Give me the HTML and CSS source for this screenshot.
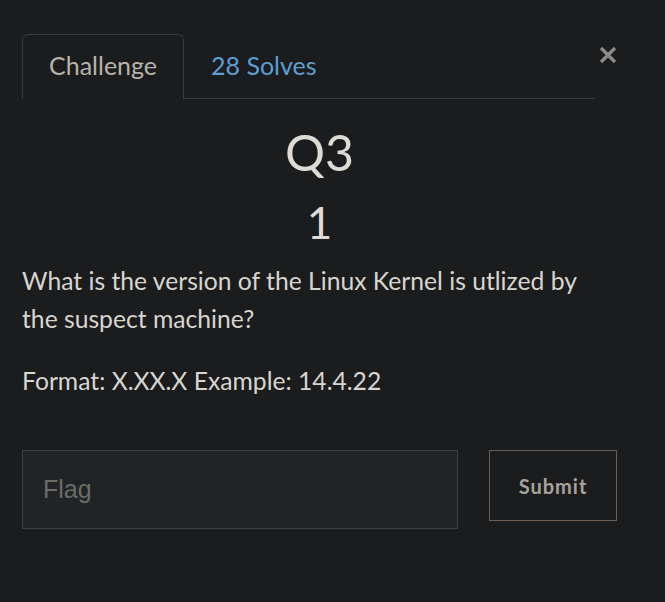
FILE: index.html
```html
<!DOCTYPE html>
<html>
<head>
<meta charset="utf-8">
<link rel="stylesheet" href="styles.css">
</head>
<body>
<div class="modal">
  <div class="header">
    <ul class="tabs">
      <li class="tab active">Challenge</li>
      <li class="tab link">28 Solves</li>
    </ul>
    <button class="close" aria-label="Close">
      <svg width="18" height="18" viewBox="0 0 18 18"><path d="M2 2 L16 16 M16 2 L2 16" stroke="#8c8c8c" stroke-width="3.2" fill="none"/></svg>
    </button>
  </div>
  <h2 class="name">Q3</h2>
  <h3 class="value">1</h3>
  <div class="desc">
    <p>What is the version of the Linux Kernel is utlized by the suspect machine?</p>
    <p>Format: X.XX.X Example: 14.4.22</p>
  </div>
  <form class="submit-row">
    <input class="flag" type="text" placeholder="Flag">
    <button class="submit" type="button">Submit</button>
  </form>
</div>
</body>
</html>
```
FILE: styles.css
```css
html, body {
  margin: 0;
  padding: 0;
  background: #1b1c1e;
}
body {
  font-family: Lato, "Open Sans", sans-serif;
  color: #d8d5cf;
}
.modal {
  padding: 34px 48px 0 22px;
}
.header {
  display: flex;
  align-items: flex-start;
}
.tabs {
  flex: 1;
  display: flex;
  list-style: none;
  margin: 0;
  padding: 0;
  border-bottom: 1px solid #3a3b3d;
}
.tab {
  height: 60px;
  line-height: 60px;
  padding: 0 26px 3px;
  font-size: 25px;
  border: 1px solid transparent;
  border-bottom: none;
  border-radius: 6px 6px 0 0;
  margin-bottom: -1px;
}
.tab.active {
  color: #b8b3aa;
  border-color: #3a3b3d;
  background: #1b1c1e;
  padding-bottom: 4px;
}
.tab.link {
  color: #5c9fd3;
}
.close {
  width: 22px;
  height: 20px;
  margin-top: 11px;
  padding: 0;
  border: none;
  background: transparent;
  display: flex;
  align-items: center;
  justify-content: flex-end;
}
.name {
  margin: 23px 0 0;
  text-align: center;
  font-weight: 400;
  font-size: 50px;
  line-height: 60px;
  color: #dedbd5;
}
.value {
  margin: 14px 0 0;
  text-align: center;
  font-weight: 400;
  font-size: 44px;
  line-height: 52px;
  color: #dedbd5;
}
.desc {
  margin-top: 14px;
  font-size: 24.7px;
  line-height: 38px;
}
.desc p {
  margin: 0 0 24px;
}
.desc p:last-child {
  margin-bottom: 0;
}
.submit-row {
  display: flex;
  align-items: flex-start;
  gap: 31px;
  margin: 50px 0 0;
}
.flag {
  box-sizing: border-box;
  width: 436px;
  height: 79px;
  padding: 0 20px;
  background: #212427;
  border: 1px solid #3c4145;
  font-family: "Liberation Sans", Arial, sans-serif;
  font-size: 25px;
  color: #d8d5cf;
  outline: none;
}
.flag::placeholder {
  color: #6c6b66;
}
.submit {
  box-sizing: border-box;
  width: 128px;
  height: 71px;
  padding: 0;
  background: transparent;
  border: 1px solid #6b5f55;
  color: #a7a39b;
  font-family: Lato, sans-serif;
  font-weight: 700;
  font-size: 20px;
  letter-spacing: 1px;
}
```
